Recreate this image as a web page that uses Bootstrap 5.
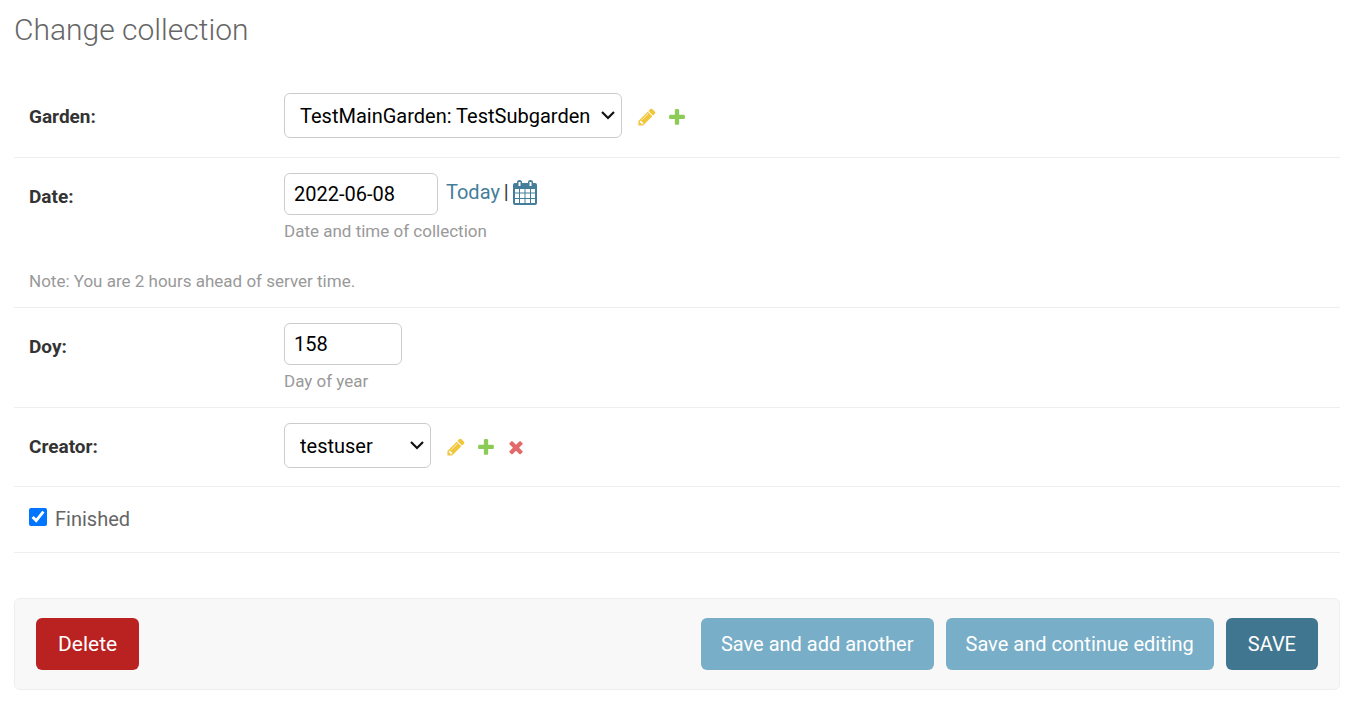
<!DOCTYPE html>
<html lang="en">
<head>
<meta charset="utf-8">
<meta name="viewport" content="width=device-width, initial-scale=1">
<title>Change collection</title>
<link href="https://cdn.jsdelivr.net/npm/bootstrap@5.3.0/dist/css/bootstrap.min.css" rel="stylesheet">
<style>
  body { font-family: Roboto, "Liberation Sans", sans-serif; font-size: 20px; line-height: 24px; color: #333; background: #fff; }
  .admin-page { padding: 12px 17px 24px 14px; }
  .page-title { font-size: 30px; line-height: 36px; font-weight: 300; color: #666; margin: 0 0 30px; }
  .form-line { border-bottom: 1px solid #eee; padding: 15px; }
  .garden-line { padding-bottom: 19px; }
  .creator-line { padding-bottom: 18px; }
  .field-label { width: 255px; padding-top: 12px; font-size: 19px; font-weight: 700; color: #333; }
  .field-box { border: 1px solid #ccc; border-radius: 6px; font-size: 20px; line-height: 24px; color: #000; padding: 8px 9px; height: 42px; }
  .date-box { width: 154px; }
  .doy-box { width: 118px; }
  .select-box { height: 45px; padding: 9px 28px 9px 15px; background-size: 14px 9px; background-position: right 6px center;
    background-image: url("data:image/svg+xml,%3csvg xmlns='http://www.w3.org/2000/svg' viewBox='0 0 14 9'%3e%3cpath d='M1 1l6 6 6-6' fill='none' stroke='%23111' stroke-width='2.2'/%3e%3c/svg%3e"); }
  .garden-box { width: 338px; }
  .creator-box { width: 147px; }
  .help-text { font-size: 17px; line-height: 22px; color: #999; margin-top: 5px; }
  .zone-note { margin-top: 28px; }
  .icon-links { gap: 10px; margin-left: 15px; padding-top: 3px; }
  .icon-links svg { width: 20px; height: 20px; display: block; opacity: .8; }
  .shortcuts { color: #333; margin-left: 8px; height: 38px; gap: 4px; }
  .shortcuts a { color: #447e9b; text-decoration: none; }
  .shortcuts svg { display: block; }
  .finished-line { padding: 20px 15px 21px; }
  .finished-line input { width: 18px; height: 18px; margin: 0 8px 4px 0; }
  .finished-line label { color: #666; }
  .submit-panel { margin-top: 45px; padding: 19px 21px; gap: 12px; background: #f8f8f8; border: 1px solid #eee; border-radius: 6px; }
  .action-btn { --bs-btn-color: #fff; --bs-btn-hover-color: #fff; --bs-btn-padding-x: 20px; --bs-btn-padding-y: 14px; --bs-btn-border-width: 0; --bs-btn-border-radius: 6px; --bs-btn-font-size: 20px; --bs-btn-line-height: 24px; --bs-btn-bg: #79aec8; --bs-btn-hover-bg: #609ab6; line-height: 24px; }
  .save-btn { --bs-btn-padding-x: 22px; --bs-btn-bg: #417690; --bs-btn-hover-bg: #205067; }
  .delete-btn { --bs-btn-padding-x: 22px; --bs-btn-font-size: 21px; --bs-btn-bg: #ba2121; --bs-btn-hover-bg: #a41515; }
</style>
</head>
<body>
<svg class="d-none" aria-hidden="true">
  <symbol id="pencil" viewBox="0 0 1792 1792"><path fill="#efb80b" d="M491 1536l91-91-235-235-91 91v107h128v128h107zm523-928q0-22-22-22-10 0-17 7l-542 542q-7 7-7 17 0 22 22 22 10 0 17-7l542-542q7-7 7-17zm-54-192l416 416-832 832h-416v-416zm683 96q0 53-37 90l-166 166-416-416 166-165q36-38 90-38 53 0 91 38l235 234q37 39 37 91z"/></symbol>
  <symbol id="plus" viewBox="0 0 1792 1792"><path fill="#70bf2b" d="M1600 796v192q0 40-28 68t-68 28h-416v416q0 40-28 68t-68 28h-192q-40 0-68-28t-28-68v-416h-416q-40 0-68-28t-28-68v-192q0-40 28-68t68-28h416v-416q0-40 28-68t68-28h192q40 0 68 28t28 68v416h416q40 0 68 28t28 68z"/></symbol>
  <symbol id="cross" viewBox="0 0 1792 1792"><path fill="#dd4646" d="M1490 1322q0 40-28 68l-136 136q-28 28-68 28t-68-28l-294-294-294 294q-28 28-68 28t-68-28l-136-136q-28-28-28-68t28-68l294-294-294-294q-28-28-28-68t28-68l136-136q28-28 68-28t68 28l294 294 294-294q28-28 68-28t68 28l136 136q28 28 28 68t-28 68l-294 294 294 294q28 28 28 68z"/></symbol>
</svg>
<main class="admin-page">
  <h1 class="page-title">Change collection</h1>
  <form>
    <div class="form-line garden-line d-flex">
      <label class="field-label flex-shrink-0" for="garden">Garden:</label>
      <div class="d-flex align-items-center">
        <select id="garden" class="form-select field-box select-box garden-box"><option>TestMainGarden: TestSubgarden</option></select>
        <div class="icon-links d-flex">
          <a href="#" aria-label="Change garden"><svg><use href="#pencil"/></svg></a>
          <a href="#" aria-label="Add garden"><svg><use href="#plus"/></svg></a>
        </div>
      </div>
    </div>
    <div class="form-line">
      <div class="d-flex">
        <label class="field-label flex-shrink-0" for="date">Date:</label>
        <div>
          <div class="d-flex">
            <input id="date" type="text" class="form-control field-box date-box" value="2022-06-08">
            <div class="shortcuts d-flex align-items-center">
              <a href="#">Today</a><span>|</span>
              <a href="#" aria-label="Choose date"><svg width="24" height="25" viewBox="0 0 24 25"><path fill="#447e9b" fill-rule="evenodd" d="M2 3h2V2q0-2 2.500-2T9 2v1h6V2q0-2 2.500-2T20 2v1h2q2 0 2 2v18q0 2-2 2H2q-2 0-2-2V5q0-2 2-2zM5.500 2v4h2V2zM16.500 2v4h2V2zM2 9v3.500h4V9zM7 9v3.500h4.500V9zM12.500 9v3.500H17V9zM18 9v3.500h4V9zM2 13.500V18h4v-4.500zM7 13.500V18h4.500v-4.500zM12.500 13.500V18H17v-4.500zM18 13.500V18h4v-4.500zM2 19v4h4v-4zM7 19v4h4.500v-4zM12.500 19v4H17v-4zM18 19v4h4v-4z"/></svg></a>
            </div>
          </div>
          <div class="help-text">Date and time of collection</div>
        </div>
      </div>
      <div class="help-text zone-note">Note: You are 2 hours ahead of server time.</div>
    </div>
    <div class="form-line d-flex">
      <label class="field-label flex-shrink-0" for="doy">Doy:</label>
      <div>
        <input id="doy" type="text" class="form-control field-box doy-box" value="158">
        <div class="help-text">Day of year</div>
      </div>
    </div>
    <div class="form-line creator-line d-flex">
      <label class="field-label flex-shrink-0" for="creator">Creator:</label>
      <div class="d-flex align-items-center">
        <select id="creator" class="form-select field-box select-box creator-box"><option>testuser</option></select>
        <div class="icon-links d-flex">
          <a href="#" aria-label="Change creator"><svg><use href="#pencil"/></svg></a>
          <a href="#" aria-label="Add creator"><svg><use href="#plus"/></svg></a>
          <a href="#" aria-label="Delete creator"><svg><use href="#cross"/></svg></a>
        </div>
      </div>
    </div>
    <div class="form-line finished-line d-flex align-items-center">
      <input id="finished" type="checkbox" checked>
      <label for="finished">Finished</label>
    </div>
    <div class="submit-panel d-flex flex-wrap">
      <button type="button" class="btn action-btn delete-btn me-auto">Delete</button>
      <button type="submit" class="btn action-btn">Save and add another</button>
      <button type="submit" class="btn action-btn">Save and continue editing</button>
      <button type="submit" class="btn action-btn save-btn">SAVE</button>
    </div>
  </form>
</main>
<script src="https://cdn.jsdelivr.net/npm/bootstrap@5.3.0/dist/js/bootstrap.bundle.min.js"></script>
</body>
</html>
